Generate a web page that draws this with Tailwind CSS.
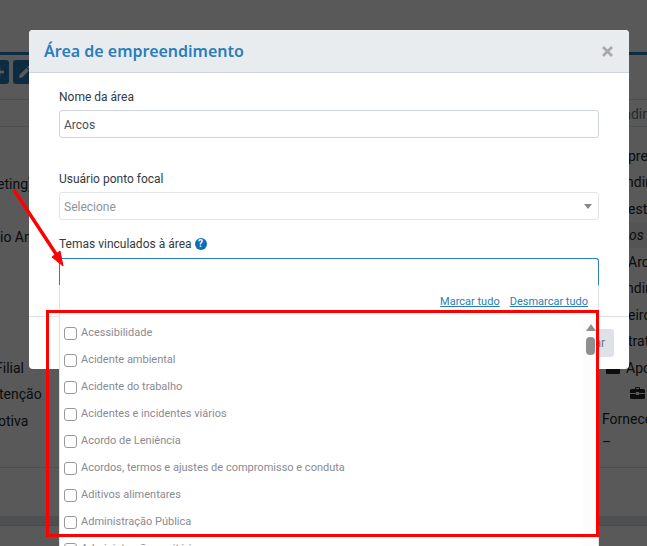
<!DOCTYPE html>
<html lang="pt-BR">

<head>
  <meta charset="UTF-8">
  <meta name="viewport" content="width=device-width, initial-scale=1.0">
  <script src="https://cdn.jsdelivr.net/npm/@tailwindcss/browser@4"></script>
  <title>Área de empreendimento</title>
</head>

<body class="relative w-[647px] h-[546px] overflow-hidden bg-white font-['Roboto',sans-serif] text-[14px] text-[#212529]">
  <!-- page behind the modal -->
  <div class="h-[546px] overflow-hidden">
    <div class="h-[52px]"></div>
    <div class="h-[48px] border-t-[3px] border-[#2a7ebb] border-b border-b-[#dee2e6] pt-[5px] flex gap-[4px] -ml-[16px]">
      <div class="w-[25px] h-[24px] rounded-[3px] bg-[#2a7ebb] flex items-center justify-end pr-[5px]">
        <svg width="10" height="10" viewBox="0 0 10 10" fill="none" stroke="#fff" stroke-width="2.5">
          <path d="M5 0v10M0 5h10" />
        </svg>
      </div>
      <div class="w-[30px] h-[24px] rounded-[3px] bg-[#2a7ebb] flex items-center pl-[6px]">
        <svg width="12" height="12" viewBox="0 0 12 12" fill="#fff">
          <path d="M0 12l.6-3.2L7.4 2l2.6 2.6-6.8 6.8zM8.2 1.2l1-1a.8.8 0 0 1 1.1 0l1.5 1.5a.8.8 0 0 1 0 1.1l-1 1z" />
        </svg>
      </div>
    </div>
    <div class="h-[27px] pt-[2px] border-b border-[#dee2e6] flex justify-end items-center text-[#6c757d]">
      <span class="-mr-[3px]">ndin</span>
    </div>
    <div class="h-[341px] border-b border-[#dee2e6] flex justify-between">
      <div class="w-[60px] pt-[44px] flex flex-col whitespace-nowrap">
        <div class="h-[26.3px] leading-[26px] -ml-[3px]">eting)</div>
        <div class="h-[26.3px]"></div>
        <div class="h-[26.3px] leading-[26px]">io An</div>
        <div class="h-[105.2px]"></div>
        <div class="h-[26.3px] leading-[26px] -ml-[5px]">Filial</div>
        <div class="h-[26.3px] leading-[26px] -ml-[1px]">tenção</div>
        <div class="h-[26.3px] leading-[26px] -ml-[2px]">otiva</div>
      </div>
      <div class="w-[47px] pt-[16px] flex flex-col whitespace-nowrap overflow-hidden">
        <div class="h-[26.3px] leading-[26px] pl-[28px]">pre</div>
        <div class="h-[26.3px] leading-[26px] pl-[26px]">ndin</div>
        <div class="h-[26.3px] leading-[26px] pl-[28px]">est</div>
        <div class="h-[26.3px] leading-[26px] pl-[29px] italic bg-[#f0f0f0]">os</div>
        <div class="h-[26.3px] leading-[28px] pl-[28px]">Arc</div>
        <div class="h-[26.3px] leading-[28px] pl-[26px]">ndin</div>
        <div class="h-[26.3px] leading-[28px] pl-[28px]">eiro</div>
        <div class="h-[26.3px] leading-[28px] pl-[28px]">trat</div>
        <div class="h-[26.3px] pt-[3px] pl-[6px] flex items-center gap-[6px]">
          <span class="w-[14px] h-[12px] shrink-0 bg-[#212529] rounded-[1px]"></span><span>Apo</span>
        </div>
        <div class="h-[26.3px] pl-[30px] flex items-center">
          <svg width="15" height="12" viewBox="0 0 15 12" fill="#212529" class="shrink-0">
            <path d="M5 2V1a1 1 0 0 1 1-1h3a1 1 0 0 1 1 1v1h3.500A1.500 1.500 0 0 1 15 3.500V6H9V5H6v1H0V3.500A1.500 1.500 0 0 1 1.500 2zM6 1v1h3V1zM0 7h6v1h3V7h6v3.500a1.500 1.500 0 0 1-1.500 1.500h-12A1.500 1.500 0 0 1 0 10.500z" />
          </svg>
        </div>
        <div class="h-[26.3px] leading-[26px] pl-[2px]">Fornece</div>
        <div class="h-[26.3px] leading-[20px] pl-[2px]">–</div>
      </div>
    </div>
    <div class="h-[48px]"></div>
    <div class="h-[10px] bg-[#dee2e6] border-b border-[#cfd3d7]"></div>
  </div>

  <div class="absolute inset-0 bg-black/65"></div>

  <!-- modal -->
  <div class="absolute left-[29px] top-[30px] w-[600px] h-[339px] bg-white rounded-[4px] flex flex-col">
    <div class="h-[43px] shrink-0 bg-[#e9ecef] border-b border-[#ced4da] rounded-t-[4px] pl-[15px] pr-[16px] flex items-center justify-between">
      <h5 class="font-['Noto_Sans',sans-serif] font-semibold text-[16px] text-[#2a7ebb]">Área de empreendimento</h5>
      <svg width="11" height="11" viewBox="0 0 11 11" fill="none" stroke="#a8a8a8" stroke-width="2.800">
        <path d="M1 1l9 9M10 1l-9 9" />
      </svg>
    </div>
    <div class="h-[243px] shrink-0 px-[30px] text-[12px] text-[#343a40]">
      <label class="block pt-[17px] h-[37px] leading-[14px]">Nome da área</label>
      <div class="h-[28px] pt-[1px] border border-[#ced4da] rounded-[3px] px-[4px] flex items-center text-[12px] text-[#495057]">Arcos</div>
      <label class="block mt-[34px] h-[20px] leading-[14px]">Usuário ponto focal</label>
      <div class="h-[28px] pt-[1px] border border-[#e1e4e8] rounded-[3px] px-[4px] flex items-center justify-between text-[12px] text-[#8d949b]">
        <span>Selecione</span>
        <span class="w-0 h-0 mr-[2px] border-x-[4px] border-x-transparent border-t-[5px] border-t-[#888]"></span>
      </div>
      <div class="mt-[15px] h-[17px] flex items-center gap-[3px]">
        <span>Temas vinculados à área</span>
        <span class="w-[12px] h-[12px] rounded-full bg-[#0a6ebd] flex items-center justify-center text-white text-[10px] font-bold leading-none">?</span>
      </div>
      <div class="relative mt-[6px] h-[27px] border border-b-0 border-[#2a7ebb] rounded-t-[3px]">
        <!-- open dropdown -->
        <div class="absolute -left-[1px] top-[26px] w-[540px] h-[300px] bg-white border-x border-[#dfe1e4]">
          <div class="h-[34px] flex justify-end items-start gap-[10px] pt-[10px] pr-[10px] text-[11px] leading-[14px] text-[#2a7ebb] underline">
            <span>Marcar tudo</span>
            <span>Desmarcar tudo</span>
          </div>
          <div class="flex">
            <ul class="flex-1 pl-[4px] pt-[1px] text-[11px] text-[#8a8a93]">
              <li class="h-[27px] flex items-center gap-[4px]"><span class="w-[13px] h-[13px] border-[1.5px] border-[#999] rounded-[3px]"></span>Acessibilidade</li>
              <li class="h-[27px] flex items-center gap-[4px]"><span class="w-[13px] h-[13px] border-[1.5px] border-[#999] rounded-[3px]"></span>Acidente ambiental</li>
              <li class="h-[27px] flex items-center gap-[4px]"><span class="w-[13px] h-[13px] border-[1.5px] border-[#999] rounded-[3px]"></span>Acidente do trabalho</li>
              <li class="h-[27px] flex items-center gap-[4px]"><span class="w-[13px] h-[13px] border-[1.5px] border-[#999] rounded-[3px]"></span>Acidentes e incidentes viários</li>
              <li class="h-[27px] flex items-center gap-[4px]"><span class="w-[13px] h-[13px] border-[1.5px] border-[#999] rounded-[3px]"></span>Acordo de Leniência</li>
              <li class="h-[27px] flex items-center gap-[4px]"><span class="w-[13px] h-[13px] border-[1.5px] border-[#999] rounded-[3px]"></span>Acordos, termos e ajustes de compromisso e conduta</li>
              <li class="h-[27px] flex items-center gap-[4px]"><span class="w-[13px] h-[13px] border-[1.5px] border-[#999] rounded-[3px]"></span>Aditivos alimentares</li>
              <li class="h-[27px] flex items-center gap-[4px]"><span class="w-[13px] h-[13px] border-[1.5px] border-[#999] rounded-[3px]"></span>Administração Pública</li>
              <li class="h-[27px] flex items-center gap-[4px]"><span class="w-[13px] h-[13px] border-[1.5px] border-[#999] rounded-[3px]"></span>Administração sanitária</li>
            </ul>
            <!-- scrollbar -->
            <div class="w-[15px] h-[260px] bg-[#fcfcfc] flex flex-col items-center pt-[5px] gap-[6px]">
              <span class="w-0 h-0 border-x-[5px] border-x-transparent border-b-[7px] border-b-[#8f8f8f]"></span>
              <span class="w-[9px] h-[18px] rounded-[4px] bg-[#8f8f8f]"></span>
            </div>
          </div>
        </div>
      </div>
    </div>
    <div class="flex-1 border-t border-[#dee2e6] flex justify-end items-start pt-[12px] pr-[15px]">
      <button class="h-[28px] px-[9px] rounded-[3px] bg-[#dee2e6] text-[#6c757d] text-[12px]">Fechar</button>
    </div>
  </div>

  <!-- annotation: red arrow and frame -->
  <svg class="absolute left-0 top-0" width="80" height="280" viewBox="0 0 80 280" fill="none">
    <path d="M14 190L58 257" stroke="#ff0000" stroke-width="3.500" />
    <path d="M63 266L52 257L60 251z" fill="#ff0000" stroke="#ff0000" />
  </svg>
  <div class="absolute left-[46px] top-[310px] w-[553px] h-[227px] border-[3px] border-[#ff0000]"></div>
</body>

</html>
